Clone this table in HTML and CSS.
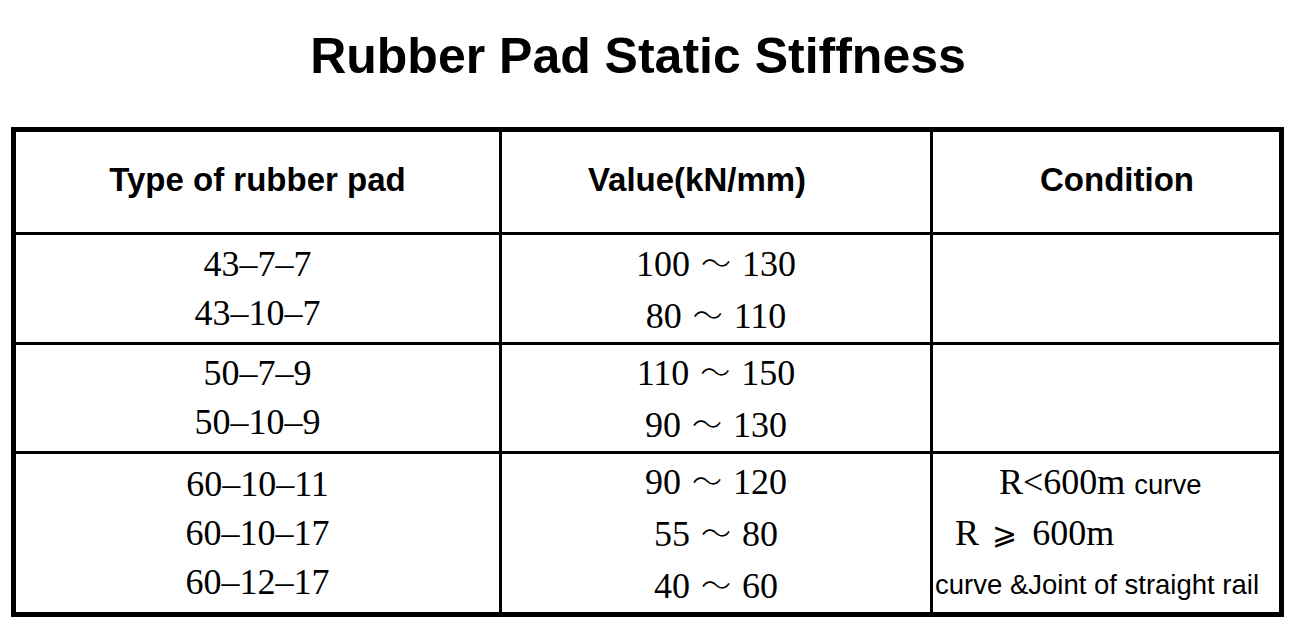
FILE: index.html
```html
<!DOCTYPE html>
<html>
<head>
<meta charset="utf-8">
<title>Rubber Pad Static Stiffness</title>
<link rel="stylesheet" href="styles.css">
</head>
<body>
<div class="page">
  <h1 class="title">Rubber Pad Static Stiffness</h1>
  <div class="grid">
    <div class="cell head">Type of rubber pad</div>
    <div class="cell head h2">Value(kN/mm)</div>
    <div class="cell head h3">Condition</div>

    <div class="cell body"><div>43–7–7</div><div>43–10–7</div></div>
    <div class="cell body"><div>100 <span class="tl">～</span> 130</div><div>80 <span class="tl">～</span> 110</div></div>
    <div class="cell body"></div>

    <div class="cell body"><div>50–7–9</div><div>50–10–9</div></div>
    <div class="cell body"><div>110 <span class="tl">～</span> 150</div><div>90 <span class="tl">～</span> 130</div></div>
    <div class="cell body"></div>

    <div class="cell body"><div>60–10–11</div><div>60–10–17</div><div>60–12–17</div></div>
    <div class="cell body"><div>90 <span class="tl">～</span> 120</div><div>55 <span class="tl">～</span> 80</div><div>40 <span class="tl">～</span> 60</div></div>
    <div class="cell body cond">
      <div class="c1">R&lt;600m <span class="sans">curve</span></div>
      <div class="c2">R <span class="geq">⩾</span> 600m</div>
      <div class="c3"><span class="sans wide">curve &amp;Joint of straight rail</span></div>
    </div>
  </div>
</div>
</body>
</html>
```

FILE: styles.css
```css
html, body {
  margin: 0;
  padding: 0;
  background: #fff;
}
.page {
  padding: 27px 0 0 11px;
}
.title {
  margin: 0 0 42px 0;
  width: 1274px;
  padding-right: 20px;
  box-sizing: border-box;
  text-align: center;
  font-family: "Liberation Sans", Arial, sans-serif;
  font-weight: bold;
  font-size: 50px;
  line-height: 58px;
  color: #000;
}
.grid {
  display: grid;
  grid-template-columns: 483px 428px 346px;
  grid-template-rows: 100px 107px 106px 158px;
  gap: 3px;
  width: max-content;
  background: #000;
  border: 5px solid #000;
}
.cell {
  background: #fff;
  display: flex;
  flex-direction: column;
  justify-content: center;
  align-items: center;
  color: #000;
}
.head {
  font-family: "Liberation Sans", Arial, sans-serif;
  font-weight: bold;
  font-size: 33px;
  line-height: 38px;
  padding-bottom: 4px;
  box-sizing: border-box;
}
.h2 { padding-right: 38px; }
.h3 { padding-left: 22px; }
.body {
  font-family: "Liberation Serif", "Times New Roman", serif;
  font-size: 36px;
  line-height: 49px;
  white-space: nowrap;
}
.tl {
  font-family: "Noto Sans CJK SC", sans-serif;
  font-size: 30px;
  font-weight: 300;
  display: inline-block;
  vertical-align: 2px;
  margin: 0 2px;
}
.cond {
  align-items: stretch;
}
.cond .c1 { padding-left: 66px; }
.cond .c2 { padding-left: 22px; }
.cond .c3 { padding-left: 2px; }
.sans {
  font-family: "Liberation Sans", Arial, sans-serif;
  font-size: 27.5px;
}
.geq {
  font-family: "DejaVu Sans", sans-serif;
  font-size: 30px;
  vertical-align: 1px;
  margin: 0 6px 0 4px;
}
```
